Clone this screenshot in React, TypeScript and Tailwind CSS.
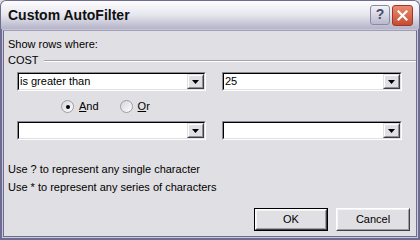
import React from "react";

const font = { fontFamily: '"Liberation Sans", Tahoma, Arial, sans-serif' };

const DropButton = () => (
  <div className="w-[17px] h-full border border-t-[#e0dfe3] border-l-[#e0dfe3] border-r-[#404040] border-b-[#404040]">
    <div className="w-full h-full flex items-center justify-center bg-[#e0dfe3] border border-t-white border-l-white border-r-[#8e8e98] border-b-[#8e8e98]">
      <svg width="7" height="4" viewBox="0 0 7 4">
        <path d="M0 0h7L3.5 4z" fill="#000" />
      </svg>
    </div>
  </div>
);

const Combo = ({ width, value }: { width: string; value?: string }) => (
  <div className={`${width} h-[19px] border border-t-[#8a8a94] border-l-[#8a8a94] border-r-white border-b-white`}>
    <div className="w-full h-full flex bg-white border border-t-black border-l-black border-r-[#e0dfe3] border-b-[#e0dfe3]">
      <span className="flex-1 pl-[1px] text-[11px] leading-[15px] text-black">{value}</span>
      <DropButton />
    </div>
  </div>
);

const Radio = ({ checked, label }: { checked?: boolean; label: string }) => (
  <div className="flex items-center gap-[5px]">
    <div className="w-[13px] h-[13px] rounded-full border border-[#9d9daa] bg-gradient-to-br from-[#d4d4de] to-white flex items-center justify-center">
      {checked && <div className="w-[4px] h-[4px] rounded-full bg-black" />}
    </div>
    <span className="text-[11px] leading-[13px] text-black">
      <span className="underline">{label[0]}</span>
      {label.slice(1)}
    </span>
  </div>
);

const Button = ({ label, isDefault }: { label: string; isDefault?: boolean }) => (
  <div className={`w-[74px] h-[23px] ${isDefault ? "border border-black" : ""}`}>
    <div className="w-full h-full border border-t-white border-l-white border-r-[#404040] border-b-[#404040]">
      <div className="w-full h-full flex items-center justify-center bg-[#e0dfe3] border border-t-[#f4f4f6] border-l-[#f4f4f6] border-r-[#9d9daa] border-b-[#9d9daa] text-[11px] text-black">
        {label}
      </div>
    </div>
  </div>
);

export default function App() {
  return (
    <div className="w-[420px] h-[240px] flex flex-col bg-[#e0dfe3]" style={font}>
      <div className="h-[29px] flex items-center justify-between pl-[7px] pr-[6px] rounded-t-[6px] border border-b-0 border-[#6e6d91] bg-gradient-to-b from-[#fdfdfe] via-[#e6e6ee] to-[#b4b3c8]">
        <span className="text-[14px] font-bold text-[#101010] pt-[1px]">Custom AutoFilter</span>
        <div className="flex gap-[2px]">
          <div className="w-[20px] h-[20px] rounded-[3px] border border-[#8b8aa5] bg-gradient-to-b from-[#f4f4f8] to-[#b9b8cc] flex items-center justify-center text-[14px] font-bold text-[#4a4a6a]">
            ?
          </div>
          <div className="w-[21px] h-[21px] rounded-[3px] border border-[#9a3a2a] bg-gradient-to-b from-[#ea8a70] to-[#c84a30] flex items-center justify-center">
            <svg width="11" height="11" viewBox="0 0 11 11">
              <path d="M1.5 1.5l8 8M9.5 1.5l-8 8" stroke="#fff" strokeWidth="2.2" strokeLinecap="square" />
            </svg>
          </div>
        </div>
      </div>
      <div className="flex-1 bg-[#6e6d91] px-[2px] pb-[2px]">
        <div className="h-full border border-[#c8c7d8]">
          <div className="h-full border border-[#6e6d91] border-t-[#9f9eb6] bg-[#e0dfe3] flex flex-col px-[4px] text-[11px] text-black">
            <div className="mt-[7px] leading-[13px]">Show rows where:</div>
            <div className="mt-[3px] flex items-center leading-[13px]">
              <span>COST</span>
              <div className="flex-1 ml-[5px] mr-[-4px] border-t border-[#a2a1ad] border-b border-b-white" />
            </div>
            <div className="mt-[5px] flex pl-[9px] gap-[16px]">
              <Combo width="w-[189px]" value="is greater than" />
              <Combo width="w-[180px]" value="25" />
            </div>
            <div className="mt-[9px] flex pl-[53px] gap-[21px]">
              <Radio checked label="And" />
              <Radio label="Or" />
            </div>
            <div className="mt-[8px] flex pl-[9px] gap-[16px]">
              <Combo width="w-[189px]" />
              <Combo width="w-[180px]" />
            </div>
            <div className="mt-[23px] leading-[13px]">Use ? to represent any single character</div>
            <div className="mt-[5px] leading-[13px]">Use * to represent any series of characters</div>
            <div className="mt-[14px] flex justify-end gap-[8px] pr-[2px]">
              <Button label="OK" isDefault />
              <Button label="Cancel" />
            </div>
          </div>
        </div>
      </div>
    </div>
  );
}
